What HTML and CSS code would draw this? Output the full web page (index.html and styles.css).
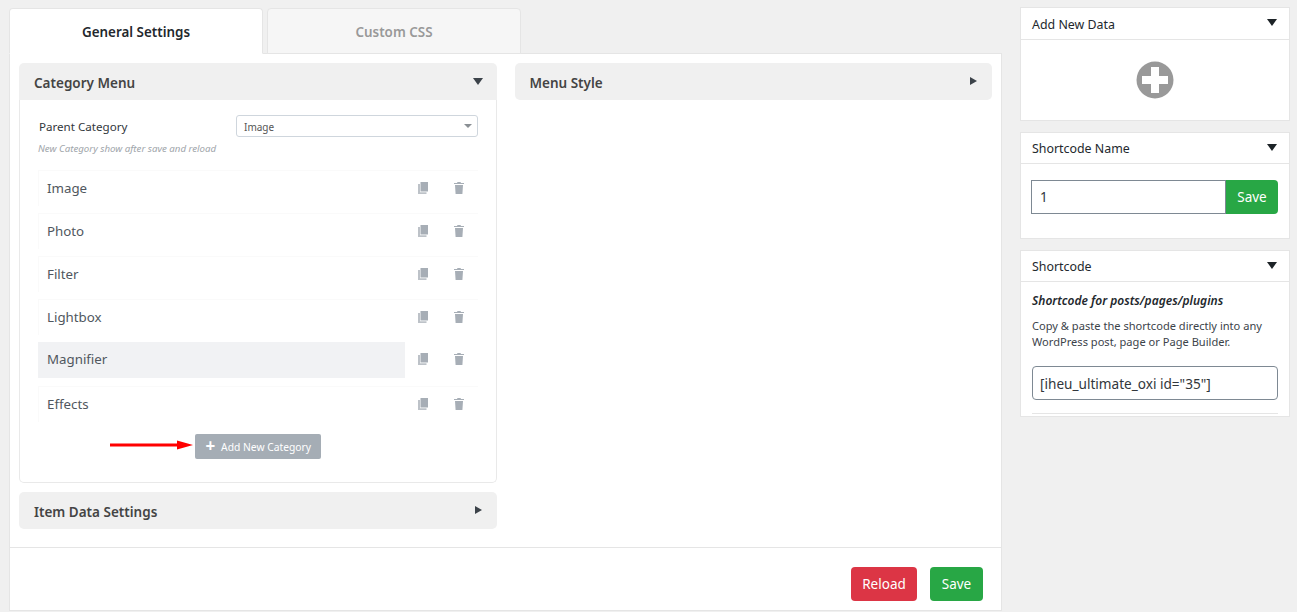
FILE: index.html
```html
<!DOCTYPE html>
<html lang="en">
<head>
<meta charset="utf-8">
<title>Settings</title>
<link rel="stylesheet" href="styles.css">
</head>
<body>
<svg class="defs" width="0" height="0" aria-hidden="true">
  <symbol id="i-copy" viewBox="0 0 10 12"><path d="M2.500 0H10v9.500H2.500z"/><path d="M0 2h2v8.200h6.500V12H0z" opacity=".75"/></symbol>
  <symbol id="i-trash" viewBox="0 0 10 12"><path d="M3.500 0h3l.5 1h3v1H0V1h3zM1 3h8l-.6 9H1.600z"/></symbol>
</svg>
<div class="page">
  <main class="main">
    <nav class="tabs">
      <div class="tab tab-active">General Settings</div>
      <div class="tab">Custom CSS</div>
    </nav>
    <section class="panel">
      <div class="columns">
        <div class="col">
          <div class="acc">
            <header class="acc-head acc-open"><span>Category Menu</span><i class="tri tri-down"></i></header>
            <div class="acc-body">
              <div class="field">
                <label class="field-label">Parent Category</label>
                <div class="select"><span>Image</span><i class="caret"></i></div>
              </div>
              <div class="hint">New Category show after save and reload</div>
              <ul class="rows">
                <li class="row"><span class="row-name">Image</span><span class="row-tools"><svg class="ic"><use href="#i-copy"/></svg><svg class="ic"><use href="#i-trash"/></svg></span></li>
                <li class="row"><span class="row-name">Photo</span><span class="row-tools"><svg class="ic"><use href="#i-copy"/></svg><svg class="ic"><use href="#i-trash"/></svg></span></li>
                <li class="row"><span class="row-name">Filter</span><span class="row-tools"><svg class="ic"><use href="#i-copy"/></svg><svg class="ic"><use href="#i-trash"/></svg></span></li>
                <li class="row"><span class="row-name">Lightbox</span><span class="row-tools"><svg class="ic"><use href="#i-copy"/></svg><svg class="ic"><use href="#i-trash"/></svg></span></li>
                <li class="row row-hover"><span class="row-name">Magnifier</span><span class="row-tools"><svg class="ic"><use href="#i-copy"/></svg><svg class="ic"><use href="#i-trash"/></svg></span></li>
                <li class="row row-last"><span class="row-name">Effects</span><span class="row-tools"><svg class="ic"><use href="#i-copy"/></svg><svg class="ic"><use href="#i-trash"/></svg></span></li>
              </ul>
              <div class="add-wrap">
                <svg class="arrow" viewBox="0 0 84 12" width="84" height="12"><path d="M0 4.500h67V1.500L83 6 67 10.500V7.500H0z" fill="#f00"/></svg>
                <button class="add-btn"><span class="plus">+</span>Add New Category</button>
              </div>
            </div>
          </div>
          <div class="acc">
            <header class="acc-head acc-shut"><span>Item Data Settings</span><i class="tri tri-right"></i></header>
          </div>
        </div>
        <div class="col">
          <div class="acc">
            <header class="acc-head acc-shut"><span>Menu Style</span><i class="tri tri-right"></i></header>
          </div>
        </div>
      </div>
      <footer class="panel-foot">
        <button class="btn btn-red">Reload</button>
        <button class="btn btn-green">Save</button>
      </footer>
    </section>
  </main>
  <aside class="side">
    <div class="card card-add">
      <header class="card-head card-head-tall"><span>Add New Data</span><i class="tri tri-down tri-dark"></i></header>
      <div class="add-body">
        <svg width="38" height="38" viewBox="0 0 38 38"><circle cx="19" cy="19" r="18.500" fill="#999"/><path d="M15 6h8v9h9v8h-9v9h-8v-9H6v-8h9z" fill="#fff"/></svg>
      </div>
    </div>
    <div class="card card-name">
      <header class="card-head"><span>Shortcode Name</span><i class="tri tri-down tri-dark"></i></header>
      <div class="name-body">
        <div class="name-input">1</div>
        <button class="name-save">Save</button>
      </div>
    </div>
    <div class="card card-code">
      <header class="card-head"><span>Shortcode</span><i class="tri tri-down tri-dark"></i></header>
      <div class="code-body">
        <h4 class="code-title">Shortcode for posts/pages/plugins</h4>
        <p class="code-text">Copy &amp; paste the shortcode directly into any WordPress post, page or Page Builder.</p>
        <div class="code-input">[iheu_ultimate_oxi id="35"]</div>
        <hr class="code-rule">
      </div>
    </div>
  </aside>
</div>
</body>
</html>
```
FILE: styles.css
```css
* { box-sizing: border-box; }
html, body { margin: 0; padding: 0; }
body {
  background: #f0f0f0;
  color: #3c434a;
  font-family: "Noto Sans", "Open Sans", sans-serif;
  font-size: 13px;
  height: 612px;
  overflow: hidden;
}
.defs { position: absolute; }
.page { display: flex; padding: 7px 7px 0 9px; gap: 18px; }
.main { width: 993px; flex: none; }
.side { width: 270px; flex: none; display: flex; flex-direction: column; gap: 11px; }

.tabs { display: flex; gap: 4px; height: 47px; padding-top: 1px; position: relative; z-index: 1; }
.tab {
  width: 254px;
  height: 46px;
  background: #f6f6f6;
  border: 1px solid #e5e5e5;
  border-radius: 4px 4px 0 0;
  color: #999;
  font-size: 13.400px;
  font-weight: 600;
  text-align: center;
  line-height: 46px;
}
.tab-active { background: #fff; color: #23282d; border-bottom-color: #fff; }

.panel { background: #fff; border: 1px solid #e5e5e5; margin-top: -1px; height: 558px; display: flex; flex-direction: column; }
.columns { flex: 1; display: flex; gap: 18px; padding: 9px 9px 0; }
.col { flex: 1 1 0; min-width: 0; display: flex; flex-direction: column; gap: 9px; }
.acc-head {
  height: 37px;
  background: #f0f0f0;
  border-radius: 5px;
  display: flex;
  align-items: center;
  justify-content: space-between;
  padding: 2px 14px 0 15px;
  font-size: 13.500px;
  font-weight: 600;
  color: #444;
}
.acc-open { border-radius: 5px 5px 0 0; }
.acc-shut { padding-right: 15px; }
.tri { display: block; width: 0; height: 0; margin-top: -3px; }
.tri-down { border-left: 5px solid transparent; border-right: 5px solid transparent; border-top: 7px solid #3c434a; }
.tri-right { border-top: 4.500px solid transparent; border-bottom: 4.500px solid transparent; border-left: 7px solid #3c434a; }
.tri-dark { border-top-color: #1d2327; }

.acc-body { height: 383px; border: 1px solid #e9e9e9; border-top: 0; border-radius: 0 0 5px 5px; padding: 15px 18px 0; }
.field { display: flex; align-items: center; height: 22px; }
.field-label { width: 198px; padding-left: 1px; font-size: 11.600px; color: #32373c; }
.select {
  flex: 1;
  height: 22px;
  border: 1px solid #cfd6dd;
  border-radius: 3px;
  display: flex;
  align-items: center;
  justify-content: space-between;
  padding: 1px 5px 0 7px;
  font-size: 10px;
  color: #555;
}
.caret { border-left: 4px solid transparent; border-right: 4px solid transparent; border-top: 4px solid #8a8f94; margin-top: -1px; }
.hint { margin: 5px 0 0; font-size: 9.700px; line-height: 14px; font-style: italic; color: #a0a5aa; }
.rows { list-style: none; margin: 14px 0 0; padding: 0; display: flex; flex-direction: column; gap: 7px; }
.row { height: 36px; display: flex; align-items: center; border-top: 1px solid #fafafa; border-left: 1px solid #fafafa; }
.row-name { width: 367px; height: 36px; line-height: 35px; padding-left: 9px; margin-left: -1px; font-size: 13.300px; color: #50575e; }
.row-hover { border-top: 0; border-left-color: #fff; }
.row-hover .row-name { background: #f1f2f4; }
.row-last { margin-top: 1px; }
.row-tools { display: flex; gap: 26px; padding-left: 13px; margin-top: -2px; }
.ic { width: 10px; height: 12px; fill: #a7aeb6; }

.add-wrap { display: flex; justify-content: center; position: relative; margin-top: 12px; }
.add-btn {
  width: 126px;
  height: 25px;
  border: 0;
  border-radius: 2px;
  background: #a5adb5;
  color: #fff;
  font-family: inherit;
  font-size: 10.300px;
  padding: 1px 0 0 2px;
  display: flex;
  align-items: center;
  justify-content: center;
  gap: 6px;
}
.plus { font-size: 17px; font-weight: 700; line-height: 1; margin-top: -3px; margin-left: -1px; }
.arrow { position: absolute; left: 72px; top: 5px; }

.panel-foot { height: 63px; border-top: 1px solid #e5e5e5; display: flex; justify-content: flex-end; gap: 13px; padding: 19px 18px 0 0; }
.btn { height: 34px; border: 0; border-radius: 4px; color: #fff; font-family: inherit; font-size: 13.500px; padding: 0; }
.btn-red { width: 66px; background: #dc3545; }
.btn-green { width: 53px; background: #28a745; }

.card { background: #fff; border: 1px solid #e5e5e5; }
.card-head {
  height: 31px;
  border-bottom: 1px solid #e5e5e5;
  display: flex;
  align-items: center;
  justify-content: space-between;
  padding: 1px 12px 0 11px;
  font-size: 12.400px;
  color: #23282d;
}
.card-head-tall { height: 32px; }
.card-add { height: 114px; }
.add-body { display: flex; justify-content: center; padding-top: 21px; }
.card-name { height: 107px; }
.name-body { display: flex; padding: 16px 11px 0 10px; }
.name-input { flex: 1; height: 34px; border: 1px solid #7e8993; padding-left: 8px; line-height: 33px; font-size: 13.500px; color: #32373c; }
.name-save { width: 52px; height: 34px; border: 0; border-radius: 0 4px 4px 0; background: #28a745; color: #fff; font-family: inherit; font-size: 13.500px; padding: 0; }
.card-code { height: 167px; }
.code-body { padding: 10px 11px 0; }
.code-title { margin: 0; font-size: 12px; line-height: 17px; font-weight: 600; font-style: italic; color: #23282d; }
.code-text { margin: 9px 0 0; font-size: 11.100px; line-height: 16px; color: #3c434a; }
.code-input { height: 34px; margin-top: 16px; border: 1px solid #7e8993; border-radius: 4px; padding-left: 7px; line-height: 33px; font-size: 13.600px; color: #32373c; }
.code-rule { border: 0; border-top: 1px solid #e5e5e5; margin: 13px 0 0; }
```
